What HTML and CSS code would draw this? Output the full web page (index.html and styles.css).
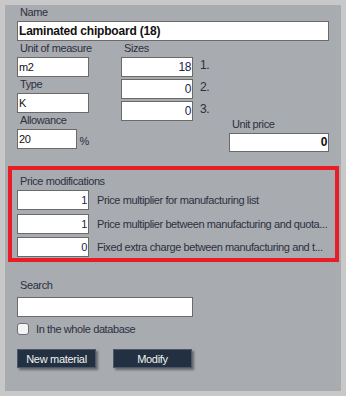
FILE: index.html
```html
<!DOCTYPE html>
<html lang="en">
<head>
    <meta charset="UTF-8">
    <title>Material</title>
    <link rel="stylesheet" href="styles.css">
</head>
<body>
    <div class="panel">
        <!-- Name -->
        <div class="label">Name</div>
        <div class="field name-field">Laminated chipboard (18)</div>

        <div class="top">
            <div class="col-left">
                <div class="label">Unit of measure</div>
                <div class="field small">m2</div>
                <div class="label">Type</div>
                <div class="field small">K</div>
                <div class="label">Allowance</div>
                <div class="with-unit">
                    <div class="field small">20</div>
                    <span class="unit">%</span>
                </div>
            </div>

            <div class="col-sizes">
                <div class="label">Sizes</div>
                <div class="size-list">
                    <div class="size-row"><div class="field num small">18</div><span>1.</span></div>
                    <div class="size-row"><div class="field num small">0</div><span>2.</span></div>
                    <div class="size-row"><div class="field num small">0</div><span>3.</span></div>
                </div>
            </div>

            <div class="col-price">
                <div class="label">Unit price</div>
                <div class="field num price">0</div>
            </div>
        </div>

        <!-- Price modifications -->
        <div class="mods">
            <div class="label">Price modifications</div>
            <div class="mod-list">
                <div class="mod-row"><div class="field num small">1</div><span class="mod-text">Price multiplier for manufacturing list</span></div>
                <div class="mod-row"><div class="field num small">1</div><span class="mod-text">Price multiplier between manufacturing and quota...</span></div>
                <div class="mod-row"><div class="field num small">0</div><span class="mod-text">Fixed extra charge between manufacturing and t...</span></div>
            </div>
        </div>

        <!-- Search -->
        <div class="label search-label">Search</div>
        <div class="field search"></div>
        <label class="check"><span class="box"></span>In the whole database</label>

        <div class="buttons">
            <button class="btn">New material</button>
            <button class="btn">Modify</button>
        </div>
    </div>
</body>
</html>
```

FILE: styles.css
```css
body {
    margin: 0;
    background-color: #c8c8c8;
    font-family: "Liberation Sans", Arial, sans-serif;
    font-size: 11px;
    letter-spacing: -0.4px;
    color: #2e3040;
}
.panel {
    margin: 5px;
    width: 336px;
    height: 386px;
    box-sizing: border-box;
    background-color: #a8abb0;
    padding: 0 12px 0 12px;
}
.label {
    line-height: 15px;
    margin-bottom: 1px;
    padding-left: 3px;
    white-space: nowrap;
}
.field {
    box-sizing: border-box;
    height: 20px;
    line-height: 18px;
    background: white;
    border: 1px solid #6a6a6a;
    padding: 0 1px;
    color: #111;
    white-space: nowrap;
    overflow: hidden;
}
.name-field {
    width: 312px;
    font-weight: bold;
    font-size: 12px;
    letter-spacing: -0.2px;
}
.small {
    width: 72px;
}
.num {
    text-align: right;
    color: #1d2550;
}
.top {
    display: flex;
}
.col-left {
    width: 72px;
}
.with-unit {
    display: flex;
    align-items: flex-end;
    gap: 3px;
}
.unit {
    line-height: 15px;
}
.col-sizes {
    margin-left: 32px;
}
.size-list {
    display: flex;
    flex-direction: column;
    gap: 2px;
}
.size-row {
    display: flex;
    align-items: center;
    gap: 7px;
    font-size: 12px;
}
.size-row span {
    margin-top: -4px;
}
.col-price {
    margin-left: auto;
    margin-top: 76px;
    margin-bottom: -3px;
}
.price {
    width: 100px;
    height: 19px;
    line-height: 17px;
    font-weight: bold;
    font-size: 12px;
    color: #111;
}
.mods {
    margin: 17px -10px 0 -9px;
    border: 4px solid #e81d25;
    padding: 4px 0 1px 5px;
}
.mod-list {
    display: flex;
    flex-direction: column;
    gap: 3.5px;
}
.mod-row {
    display: flex;
    align-items: center;
    gap: 8px;
}
.mod-row .field {
    flex: none;
}
.mod-text {
    white-space: nowrap;
}
.search-label {
    margin-top: 16px;
    margin-bottom: 4px;
}
.search {
    width: 176px;
}
.check {
    display: flex;
    align-items: center;
    gap: 7px;
    margin-top: 6px;
    line-height: 12px;
}
.box {
    width: 12px;
    height: 12px;
    box-sizing: border-box;
    background: #f4f4f4;
    border: 1px solid #6e6e6e;
    border-radius: 3px;
}
.buttons {
    display: flex;
    gap: 17px;
    margin-top: 14px;
}
.btn {
    width: 79px;
    height: 19px;
    padding: 0;
    background-color: #223041;
    border: 1px solid #4c5868;
    color: #f2f2f2;
    font-family: "Liberation Sans", Arial, sans-serif;
    font-size: 11px;
    letter-spacing: -0.3px;
    box-shadow: 2px 2px 2px rgba(60, 60, 60, 0.6);
}
```
